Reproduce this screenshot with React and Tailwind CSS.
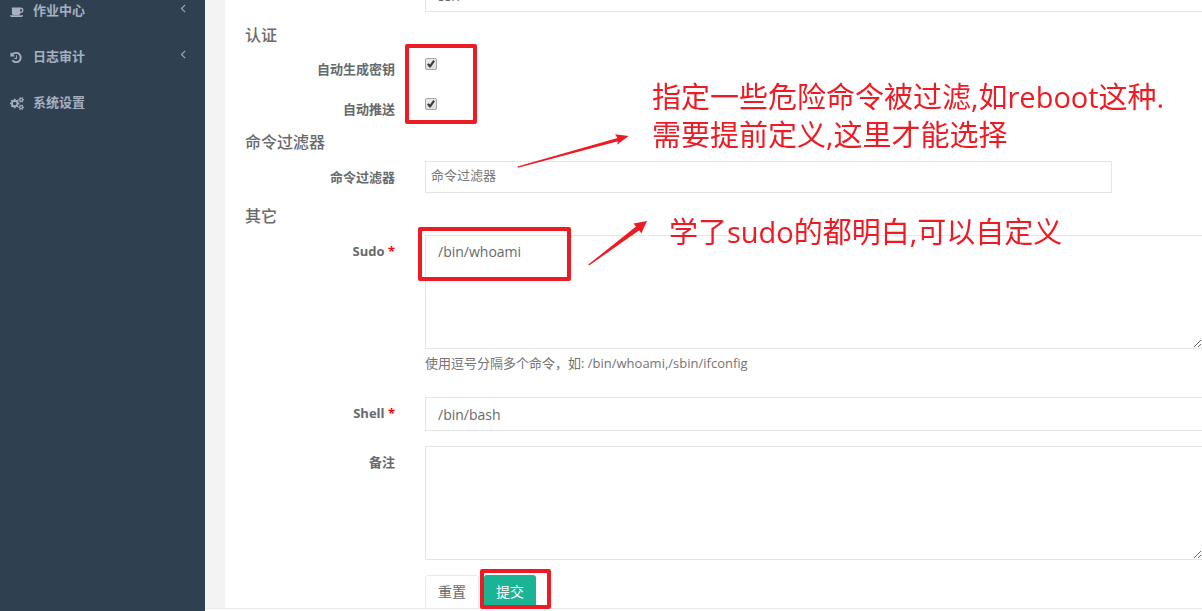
const ICONS = {
  coffee:
    'M1664 736q0-80-56-136t-136-56h-64v384h64q80 0 136-56t56-136zm-1664 672h1792q0 106-75 181t-181 75h-1280q-106 0-181-75t-75-181zm1856-672q0 159-112.5 271.5t-271.5 112.5h-64v32q0 92-66 158t-158 66h-704q-92 0-158-66t-66-158v-736q0-26 19-45t45-19h1152q159 0 271.5 112.5t112.5 271.5z',
  history:
    'M1536 896q0 156-61 298t-164 245-245 164-298 61q-172 0-327-72.5t-264-204.5q-7-10-6.5-22.5t8.5-20.5l137-138q10-9 25-9 16 2 23 12 73 95 179 147t225 52q104 0 198.5-40.5t163.5-109.5 109.5-163.5 40.5-198.5-40.5-198.5-109.5-163.5-163.5-109.5-198.5-40.5q-98 0-188 35.5t-160 101.5l137 138q31 30 14 69-17 40-59 40h-448q-26 0-45-19t-19-45v-448q0-42 40-59 39-17 69 14l130 129q107-101 244.5-156.5t284.5-55.5q156 0 298 61t245 164 164 245 61 298zm-640-288v448q0 14-9 23t-23 9h-320q-14 0-23-9t-9-23v-64q0-14 9-23t23-9h224v-352q0-14 9-23t23-9h64q14 0 23 9t9 23z',
  cogs:
    'M896 896q0-106-75-181t-181-75-181 75-75 181 75 181 181 75 181-75 75-181zm768 512q0-52-38-90t-90-38-90 38-38 90q0 53 37.5 90.5t90.5 37.5 90.5-37.5 37.5-90.5zm0-1024q0-52-38-90t-90-38-90 38-38 90q0 53 37.5 90.5t90.5 37.5 90.5-37.5 37.5-90.5zm-384 421v185q0 10-7 19.5t-16 10.5l-155 24q-11 35-32 76 34 48 90 115 7 11 7 20 0 12-7 19-23 30-82.5 89.5t-78.5 59.5q-11 0-21-7l-115-90q-37 19-77 31-11 108-23 155-7 24-30 24h-186q-11 0-20-7.5t-10-17.5l-23-153q-34-10-75-31l-118 89q-7 7-20 7-11 0-21-8-144-133-144-160 0-9 7-19 10-14 41-53t47-61q-23-44-35-82l-152-24q-10-1-17-9.5t-7-19.5v-185q0-10 7-19.5t16-10.5l155-24q11-35 32-76-34-48-90-115-7-11-7-20 0-12 7-20 22-30 82-89t79-59q11 0 21 7l115 90q34-18 77-32 11-108 23-154 7-24 30-24h186q11 0 20 7.5t10 17.5l23 153q34 10 75 31l118-89q8-7 20-7 11 0 21 8 144 133 144 160 0 8-7 19-12 16-42 54t-45 60q23 48 34 82l152 23q10 2 17 10.5t7 19.5zm640 533v140q0 16-149 31-12 27-30 52 51 113 51 138 0 4-4 7-122 71-124 71-8 0-46-47t-52-68q-20 2-30 2t-30-2q-14 21-52 68t-46 47q-2 0-124-71-4-3-4-7 0-25 51-138-18-25-30-52-149-15-149-31v-140q0-16 149-31 13-29 30-52-51-113-51-138 0-4 4-7 4-2 35-20t59-34 30-16q8 0 46 46.5t52 67.5q20-2 30-2t30 2q51-71 92-112l6-2q4 0 124 70 4 3 4 7 0 25-51 138 17 23 30 52 149 15 149 31zm0-1024v140q0 16-149 31-12 27-30 52 51 113 51 138 0 4-4 7-122 71-124 71-8 0-46-47t-52-68q-20 2-30 2t-30-2q-14 21-52 68t-46 47q-2 0-124-71-4-3-4-7 0-25 51-138-18-25-30-52-149-15-149-31v-140q0-16 149-31 13-29 30-52-51-113-51-138 0-4 4-7 4-2 35-20t59-34 30-16q8 0 46 46.5t52 67.5q20-2 30-2t30 2q51-71 92-112l6-2q4 0 124 70 4 3 4 7 0 25-51 138 17 23 30 52 149 15 149 31z',
};

const NAV = [
  { icon: 'coffee', box: '0 0 1920 1792', width: 'w-[14px]', label: '作业中心', nested: true },
  { icon: 'history', box: '0 0 1536 1792', width: 'w-[12px]', label: '日志审计', nested: true },
  { icon: 'cogs', box: '0 0 1920 1792', width: 'w-[14px]', label: '系统设置', nested: false },
];

function Sidebar() {
  return (
    <nav className="w-[205px] shrink-0 bg-[#2f4050]">
      <ul className="-mt-3">
        {NAV.map((item) => (
          <li key={item.label}>
            <a href="#" className="flex h-[46px] items-center pr-[19px] pl-[10px] font-semibold text-[#a7b1c2]">
              <span className="w-[23px]">
                <svg viewBox={item.box} className={`h-[13px] ${item.width}`} fill="currentColor" aria-hidden="true">
                  <path d={ICONS[item.icon]} />
                </svg>
              </span>
              <span className="flex-1">{item.label}</span>
              {item.nested && (
                <svg viewBox="0 0 640 1792" className="mb-[6px] h-[14px] w-[6px]" fill="currentColor" aria-hidden="true">
                  <path d="M627 544q0 13-10 23l-393 393 393 393q10 10 10 23t-10 23l-50 50q-10 10-23 10t-23-10l-466-466q-10-10-10-23t10-23l466-466q10-10 23-10t23 10l50 50q10 10 10 23z" />
                </svg>
              )}
            </a>
          </li>
        ))}
      </ul>
    </nav>
  );
}

function Heading({ children }) {
  return <h3 className="mt-[13px] mb-[9px] text-[16px] leading-5 font-medium">{children}</h3>;
}

function Row({ id, label, required, children }) {
  return (
    <div className="flex gap-[30px]">
      <label htmlFor={id} className="w-[150px] shrink-0 pt-[6px] text-right leading-5 font-bold">
        {label}
        {required && <span className="text-[#ff0000]"> *</span>}
      </label>
      <div className="min-w-0 flex-1">{children}</div>
    </div>
  );
}

function CheckRow({ id, label }) {
  return (
    <div className="flex h-[25px] gap-[30px]">
      <label htmlFor={id} className="w-[150px] shrink-0 pt-[5px] text-right leading-5 font-bold">
        {label}
      </label>
      <div className="grid h-5 w-3 content-center">
        <input
          id={id}
          type="checkbox"
          defaultChecked
          className="peer col-start-1 row-start-1 size-3 appearance-none rounded-[2px] border border-[#a5a5a5] bg-linear-to-b from-[#eeeeee] to-[#dddddd]"
        />
        <svg
          viewBox="0 0 12 12"
          className="pointer-events-none invisible col-start-1 row-start-1 size-3 peer-checked:visible"
          aria-hidden="true"
        >
          <path d="M2 6.4 3.5 5.2 5 6.6 8.3 2 10 3.2 5.6 9.6 4.4 9.6Z" fill="#3c3c3c" />
        </svg>
      </div>
    </div>
  );
}

const FIELD = 'block w-full border border-[#e5e6e7] bg-white px-3 text-[14px] outline-none';

function FormPanel() {
  return (
    <form className="-mt-[22px] ml-5 flex-1 bg-white pl-5">
      <Row id="protocol" label="">
        <input id="protocol" aria-label="协议" defaultValue="ssh" className={`${FIELD} h-[34px]`} />
      </Row>

      <Heading>认证</Heading>
      <div className="flex flex-col gap-[15px]">
        <CheckRow id="auto-key" label="自动生成密钥" />
        <CheckRow id="auto-push" label="自动推送" />
      </div>

      <Heading>命令过滤器</Heading>
      <Row id="filter" label="命令过滤器">
        <input
          id="filter"
          placeholder="命令过滤器"
          className="block h-8 w-[687px] max-w-full border border-[#e5e6e7] bg-white px-[5px] pb-1 outline-none placeholder:text-[#777777]"
        />
      </Row>

      <Heading>其它</Heading>
      <div className="flex flex-col gap-[15px]">
        <Row id="sudo" label="Sudo" required>
          <textarea id="sudo" defaultValue="/bin/whoami" className={`${FIELD} h-[114px] py-[6px] leading-5`} />
          <p className="mt-[5px] mb-[10px] leading-[18px] text-[#737373]">
            使用逗号分隔多个命令，如: /bin/whoami,/sbin/ifconfig
          </p>
        </Row>
        <Row id="shell" label="Shell" required>
          <input id="shell" defaultValue="/bin/bash" className={`${FIELD} h-[34px]`} />
        </Row>
        <Row id="comment" label="备注">
          <textarea id="comment" className={`${FIELD} h-[114px] py-[6px] leading-5`} />
        </Row>
        <div className="flex gap-[5px] pl-[180px] text-[14px]">
          <button type="reset" className="h-[34px] rounded-[3px] border border-[#e7eaec] bg-white px-3 pb-[2px]">
            重置
          </button>
          <button type="submit" className="h-[34px] rounded-[3px] bg-[#1ab394] px-3 pb-[2px] text-white">
            提交
          </button>
        </div>
      </div>
    </form>
  );
}

function Annotations() {
  return (
    <div className="pointer-events-none absolute inset-0 z-10 text-[29px] leading-[38px] whitespace-nowrap text-[#ed1c24]">
      <div className="absolute top-[44px] left-[405px] h-[80px] w-[72px] rounded-[2px] border-4 border-[#ed1c24]" />
      <div className="absolute top-[227px] left-[418px] h-[54px] w-[153px] rounded-[2px] border-4 border-[#ed1c24]" />
      <div className="absolute top-[569px] left-[480px] h-[40px] w-[71px] rounded-[2px] border-4 border-[#ed1c24]" />
      <svg className="absolute top-[130px] left-[510px] h-[140px] w-[145px]" viewBox="510 130 145 140" fill="#ed1c24" aria-hidden="true">
        <path d="M517.5 166.5 617.5 138 615 134.2 628.7 136 617 144.7 618 141.2 518 167.7Z" />
        <path d="M588.3 264.6 636 226.5 633.5 223.6 647 221 641.3 233.6 639.3 230.2 589 265.6Z" />
      </svg>
      <p className="absolute top-[78px] left-[652px]">
        指定一些危险命令被过滤,如reboot这种.
        <br />
        需要提前定义,这里才能选择
      </p>
      <p className="absolute top-[213px] left-[669px]">学了sudo的都明白,可以自定义</p>
    </div>
  );
}

export default function App() {
  return (
    <div className="relative flex h-screen overflow-hidden bg-[#f3f3f4] font-['Open_Sans','Noto_Sans_CJK_SC',sans-serif] text-[13px] text-[#676a6c]">
      <Sidebar />
      <main className="-mr-px flex min-w-0 flex-1 flex-col">
        <FormPanel />
        <footer className="fixed right-0 bottom-0 left-[205px] h-[3px] border-t border-[#e7eaec] bg-white" />
      </main>
      <Annotations />
    </div>
  );
}
